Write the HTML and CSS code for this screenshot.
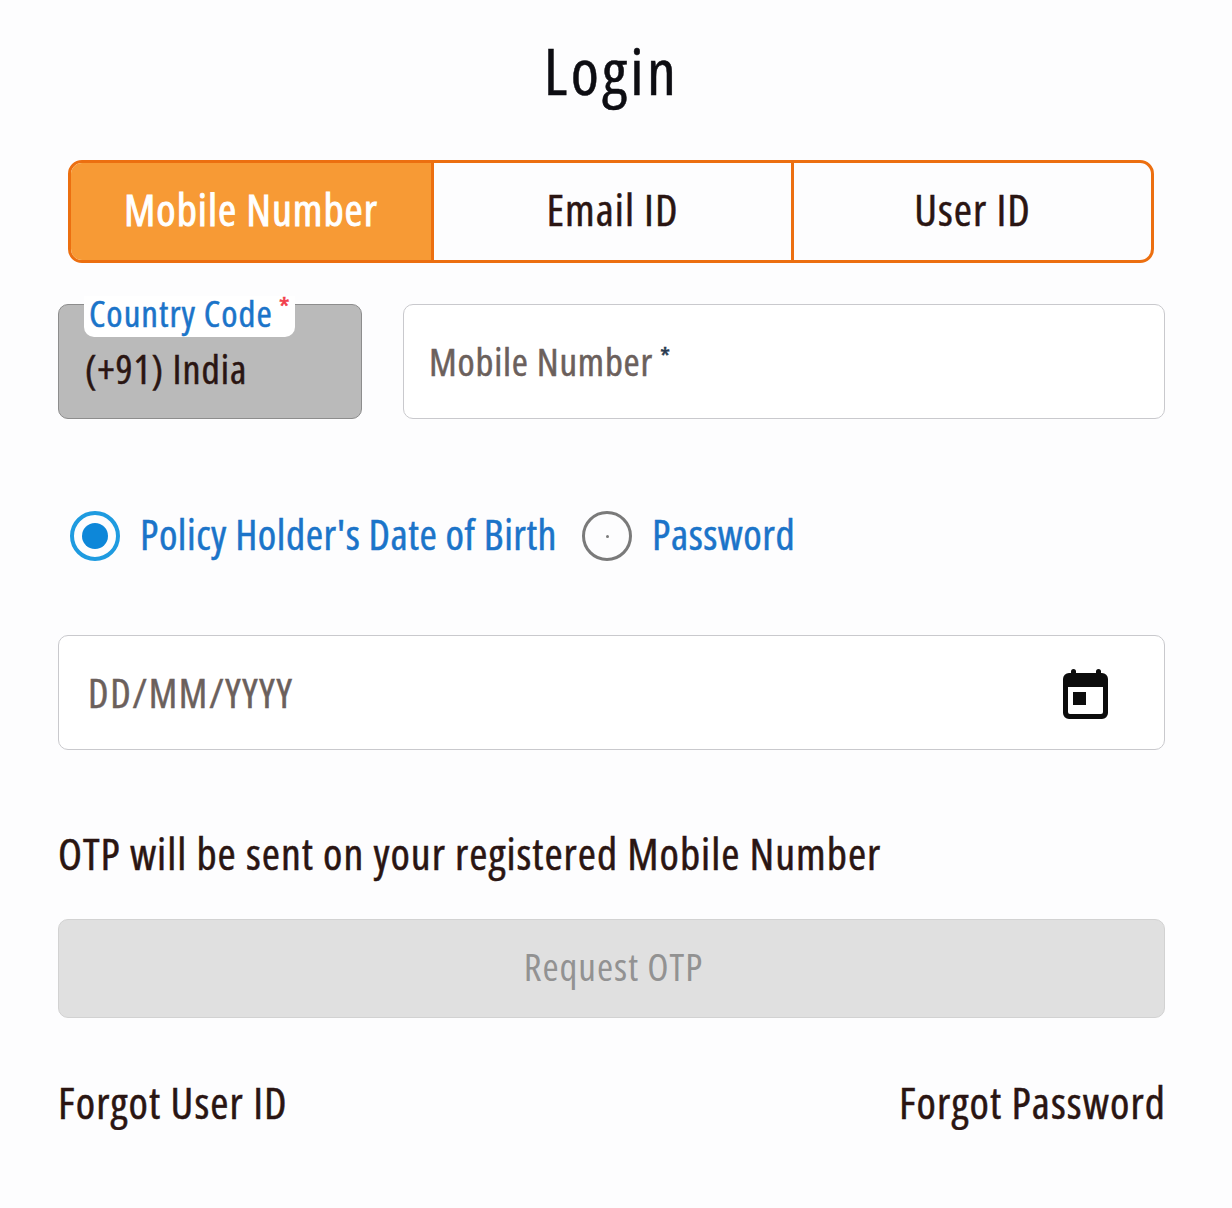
FILE: index.html
```html
<!DOCTYPE html>
<html lang="en">
<head>
  <meta charset="UTF-8">
  <meta name="viewport" content="width=device-width, initial-scale=1.0">
  <title>Login</title>
  <link rel="stylesheet" href="styles.css">
</head>
<body>
  <div class="login">
    <h1 class="title">Login</h1>

    <div class="tabs">
      <div class="tab active">Mobile Number</div>
      <div class="tab">Email ID</div>
      <div class="tab">User ID</div>
    </div>

    <div class="mobile-row">
      <div class="country">
        <div class="country-label">Country Code<span class="req">*</span></div>
        <div class="country-value">(+91) India</div>
      </div>
      <div class="field mobile-field">
        <span class="placeholder">Mobile Number</span><span class="star">*</span>
      </div>
    </div>

    <div class="radios">
      <div class="radio-dot on"><span></span></div>
      <div class="radio-label">Policy Holder's Date of Birth</div>
      <div class="radio-dot off"><span></span></div>
      <div class="radio-label">Password</div>
    </div>

    <div class="field date-field">
      <span class="placeholder date-text">DD/MM/YYYY</span>
      <svg class="cal" width="46" height="51" viewBox="0 0 46 51">
        <path fill="#0c0c0c" fill-rule="evenodd" d="M8 4V2.500a2.500 2.500 0 0 1 5 0V4h20V2.500a2.500 2.500 0 0 1 5 0V4h1a6 6 0 0 1 6 6v34a6 6 0 0 1-6 6H6a6 6 0 0 1-6-6V10a6 6 0 0 1 6-6zM5 18v25a2 2 0 0 0 2 2h31a2 2 0 0 0 2-2V18z"/>
        <rect x="10" y="23" width="13" height="13" fill="#0c0c0c"/>
      </svg>
    </div>

    <div class="otp-note">OTP will be sent on your registered Mobile Number</div>

    <button class="otp-btn">Request OTP</button>

    <div class="links">
      <div class="link">Forgot User ID</div>
      <div class="link">Forgot Password</div>
    </div>
  </div>
</body>
</html>
```

FILE: styles.css
```css
/* General Styles */
body {
  font-family: "Open Sans", "Noto Sans", sans-serif;
  font-stretch: 75%;
  letter-spacing: 1px;
  -webkit-text-stroke: 0.5px;
  background-color: #fdfdfe;
  color: #2a1512;
  margin: 0;
}

.login {
  width: 1107px;
  margin-left: 58px;
  padding-top: 33px;
}

.title {
  margin: 0;
  height: 127px;
  line-height: 76px;
  font-size: 64px;
  font-weight: 400;
  letter-spacing: 3.4px;
  text-align: center;
  color: #0d0d12;
}

/* Tabs */
.tabs {
  display: flex;
  height: 103px;
  margin: 0 11px 41px 10px;
  border: 3px solid #ec6f10;
  border-radius: 14px;
  box-sizing: border-box;
  overflow: hidden;
}

.tab {
  flex: 1;
  display: flex;
  align-items: center;
  justify-content: center;
  padding-bottom: 5px;
  box-sizing: border-box;
  font-size: 44px;
  border-left: 3px solid #ec6f10;
}

.tab.active {
  flex: none;
  width: 360px;
  border-left: none;
  background: #f79a35;
  color: white;
  -webkit-text-stroke: 0.9px;
}

/* Mobile row */
.mobile-row {
  display: flex;
  gap: 41px;
  height: 115px;
}

.country {
  position: relative;
  width: 304px;
  box-sizing: border-box;
  background: #bababa;
  border: 1px solid #8d8d8d;
  border-radius: 10px;
  padding: 38px 0 0 26px;
}

.country-label {
  position: absolute;
  top: -9px;
  left: 25px;
  width: 211px;
  height: 41px;
  padding-left: 5px;
  box-sizing: border-box;
  background: white;
  border-radius: 0 0 10px 10px;
  font-size: 37px;
  line-height: 34px;
  color: #1b74c9;
  white-space: nowrap;
}

.req {
  color: #f2404c;
  font-size: 28px;
  line-height: 0;
  vertical-align: 9px;
  margin-left: 6px;
}

.country-value {
  font-size: 40px;
  line-height: 52px;
}

.field {
  flex: 1;
  display: flex;
  align-items: center;
  border: 1px solid #c9c9cd;
  border-radius: 10px;
  background: white;
  box-sizing: border-box;
}

.placeholder {
  font-size: 39px;
  letter-spacing: 0.8px;
  color: #6b605c;
}

.mobile-field {
  padding: 0 0 2px 25px;
}

.star {
  font-size: 26px;
  margin-left: 7px;
  margin-bottom: 10px;
  color: #2a3a50;
}

/* Radios */
.radios {
  display: flex;
  align-items: center;
  height: 50px;
  margin: 92px 0 74px 12px;
}

.radio-dot {
  width: 50px;
  height: 50px;
  box-sizing: border-box;
  border-radius: 50%;
  display: flex;
  align-items: center;
  justify-content: center;
}

.radio-dot.on {
  border: 4px solid #1e9be0;
}

.radio-dot.on span {
  width: 26px;
  height: 26px;
  border-radius: 50%;
  background: #0d87d9;
}

.radio-dot.off {
  border: 3px solid #7a7a7a;
}

.radio-dot.off span {
  width: 3px;
  height: 3px;
  border-radius: 50%;
  background: #7a7a7a;
}

.radio-label {
  font-size: 42px;
  letter-spacing: 0.5px;
  color: #1b74c9;
  margin: 0 25px 6px 20px;
}

/* Date */
.date-field {
  height: 115px;
  flex: none;
  padding: 0 55px 0 29px;
  justify-content: space-between;
}

.date-text {
  font-size: 40px;
  letter-spacing: 1.7px;
}

.cal {
  display: block;
  margin-top: 4px;
}

.otp-note {
  margin-top: 73px;
  height: 60px;
  line-height: 60px;
  font-size: 44px;
}

.otp-btn {
  display: block;
  width: 100%;
  height: 99px;
  margin-top: 36px;
  padding: 0 0 6px 4px;
  background: #e0e0e0;
  border: 1px solid #d2d2d2;
  border-radius: 10px;
  font-family: inherit;
  font-stretch: inherit;
  letter-spacing: inherit;
  font-size: 39px;
  color: #929292;
  -webkit-text-stroke: 0;
}

.links {
  display: flex;
  justify-content: space-between;
  margin: 56px -1px 0 0;
}

.link {
  font-size: 44px;
  letter-spacing: 1.1px;
  line-height: 56px;
}
```
